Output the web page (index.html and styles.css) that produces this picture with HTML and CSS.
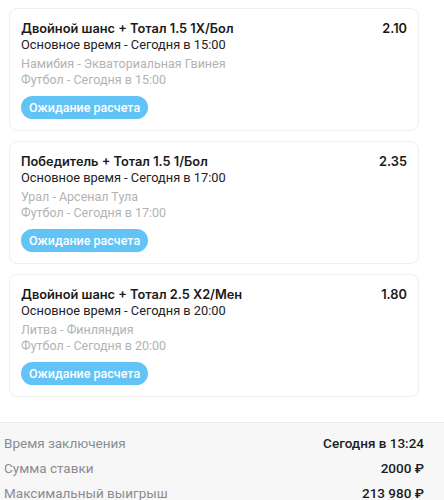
FILE: index.html
```html
<!DOCTYPE html>
<html lang="ru">
<head>
<meta charset="utf-8">
<link rel="stylesheet" href="styles.css">
</head>
<body>
<div class="list">
  <div class="card">
    <div class="head">
      <div class="title">Двойной шанс + Тотал 1.5 1X/Бол</div>
      <div class="odd">2.10</div>
    </div>
    <div class="sub">Основное время - Сегодня в 15:00</div>
    <div class="meta">Намибия - Экваториальная Гвинея</div>
    <div class="meta">Футбол - Сегодня в 15:00</div>
    <span class="badge">Ожидание расчета</span>
  </div>
  <div class="card">
    <div class="head">
      <div class="title">Победитель + Тотал 1.5 1/Бол</div>
      <div class="odd">2.35</div>
    </div>
    <div class="sub">Основное время - Сегодня в 17:00</div>
    <div class="meta">Урал - Арсенал Тула</div>
    <div class="meta">Футбол - Сегодня в 17:00</div>
    <span class="badge">Ожидание расчета</span>
  </div>
  <div class="card">
    <div class="head">
      <div class="title">Двойной шанс + Тотал 2.5 X2/Мен</div>
      <div class="odd">1.80</div>
    </div>
    <div class="sub">Основное время - Сегодня в 20:00</div>
    <div class="meta">Литва - Финляндия</div>
    <div class="meta">Футбол - Сегодня в 20:00</div>
    <span class="badge">Ожидание расчета</span>
  </div>
</div>
<div class="summary">
  <div class="row"><span class="label">Время заключения</span><span class="value">Сегодня в 13:24</span></div>
  <div class="row"><span class="label">Сумма ставки</span><span class="value">2000 ₽</span></div>
  <div class="row"><span class="label">Максимальный выигрыш</span><span class="value">213 980 ₽</span></div>
</div>
</body>
</html>
```
FILE: styles.css
```css
* { box-sizing: border-box; }
body {
  margin: 0;
  background: #fff;
  font-family: Roboto, "Noto Sans", sans-serif;
  color: #1c1c1e;
}
.list {
  display: flex;
  flex-direction: column;
  gap: 10px;
  padding: 8px 25px 0 9px;
}
.card {
  border: 1px solid #efefef;
  border-radius: 8px;
  padding: 12px 11px 11px 11px;
  display: flex;
  flex-direction: column;
  align-items: flex-start;
  box-shadow: 0 0 2px rgba(0,0,0,0.03);
}
.head {
  display: flex;
  justify-content: space-between;
  width: 100%;
}
.title, .odd {
  font-family: Inter, Roboto, sans-serif;
  font-size: 12.8px;
  font-weight: 600;
  line-height: 16px;
  color: #1a1a1a;
}
.sub {
  font-size: 12.8px;
  line-height: 16px;
  color: #222;
  margin-bottom: 3px;
}
.meta {
  font-size: 12.5px;
  line-height: 16px;
  color: #b3b3b3;
}
.badge {
  margin-top: 8px;
  background: #62c3f7;
  color: #fff;
  font-size: 12.5px;
  font-weight: 500;
  line-height: 23px;
  height: 23px;
  padding: 0 8px;
  border-radius: 12px;
}
.summary {
  margin-top: 25px;
  background: #f7f7f8;
  border-top: 1px solid #ececec;
  padding: 7px 20px 0 4px;
}
.row {
  display: flex;
  justify-content: space-between;
  height: 25px;
  align-items: center;
  font-size: 13.5px;
}
.label { color: #8c8c90; }
.value { color: #1c1c1e; font-weight: 500; }
```
